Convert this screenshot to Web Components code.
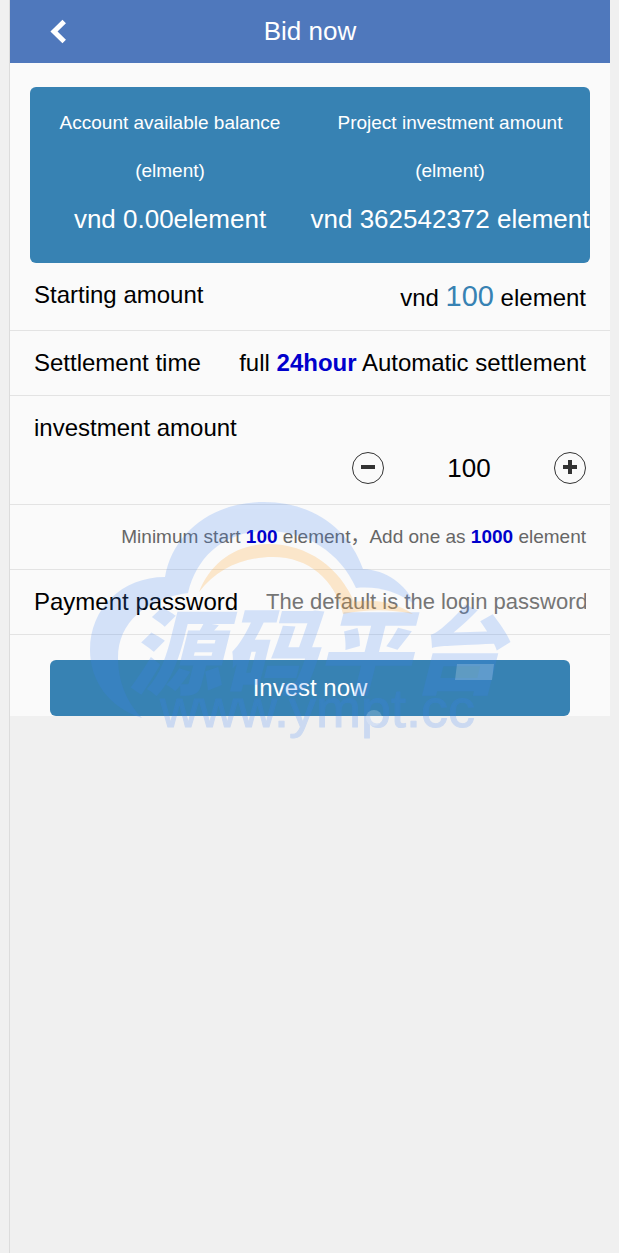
<!DOCTYPE html>
<html lang="en">
<head>
  <meta charset="UTF-8">
  <meta name="viewport" content="width=device-width, initial-scale=1.0">
  <title>Bid now</title>
  <style>
    :root {
      --header: #4f78bc;
      --primary: #3782b3;
      --surface: #fafafa;
      --bg: #f0f0f0;
      --line: #e3e3e3;
      --strong: #0000cc;
    }

    body {
      margin: 0;
      background: var(--bg);
      color: #000;
      font-family: 'Liberation Sans', 'Noto Sans CJK SC', sans-serif;
      font-size: 24px;
    }
  </style>
</head>
<body>
  <bid-page>
    <page-header slot="header" back="#">Bid now</page-header>
    <balance-card>
      <balance-item>
        Account available balance<br>(elment)
        <span slot="value">vnd 0.00element</span>
      </balance-item>
      <balance-item>
        Project investment amount<br>(elment)
        <span slot="value">vnd 362542372 element</span>
      </balance-item>
    </balance-card>
    <bid-form></bid-form>
    <water-mark slot="overlay"></water-mark>
  </bid-page>

  <script>
    class BidPage extends HTMLElement {
      constructor() {
        super();
        const shadow = this.attachShadow({ mode: 'open' });

        shadow.innerHTML = `
  <style>
    :host {
      display: block;
      position: relative;
      box-sizing: border-box;
      min-height: 100vh;
      margin: 0 9px;
      border-left: 1px solid #dcdcdc;
    }

    main {
      background: var(--surface);
      padding-top: 24px;
    }
  </style>

  <slot name="header"></slot>
  <main><slot></slot></main>
  <slot name="overlay"></slot>
`;
      }
    }

    class PageHeader extends HTMLElement {
      constructor() {
        super();
        const shadow = this.attachShadow({ mode: 'open' });

        shadow.innerHTML = `
  <style>
    :host {
      display: block;
    }

    header {
      display: grid;
      grid-template-columns: 96px 1fr 96px;
      align-items: center;
      height: 63px;
      background: var(--header);
      color: #fff;
    }

    a {
      display: flex;
      justify-content: center;
    }

    h1 {
      margin: 0;
      font-size: 26px;
      font-weight: 400;
      text-align: center;
    }
  </style>

  <header>
    <a href="${this.getAttribute('back')}" aria-label="Back">
      <svg width="20" height="28" viewBox="0 0 20 28" fill="none" stroke="#fff" stroke-width="5">
        <path d="M16.200 3.500 6 13.500l10.200 10"/>
      </svg>
    </a>
    <h1><slot></slot></h1>
  </header>
`;
      }
    }

    class BalanceCard extends HTMLElement {
      constructor() {
        super();
        const shadow = this.attachShadow({ mode: 'open' });

        shadow.innerHTML = `
  <style>
    :host {
      display: grid;
      grid-template-columns: 1fr 1fr;
      margin: 0 20px;
      padding: 12px 0 20px;
      border-radius: 6px;
      background: var(--primary);
      color: #fff;
    }
  </style>

  <slot></slot>
`;
      }
    }

    class BalanceItem extends HTMLElement {
      constructor() {
        super();
        const shadow = this.attachShadow({ mode: 'open' });

        shadow.innerHTML = `
  <style>
    :host {
      display: block;
      min-width: 0;
      line-height: 48px;
      text-align: center;
      white-space: nowrap;
    }

    .label {
      font-size: 19px;
    }

    .value {
      font-size: 26px;
    }
  </style>

  <div class="label"><slot></slot></div>
  <div class="value"><slot name="value"></slot></div>
`;
      }
    }

    class FormRow extends HTMLElement {
      constructor() {
        super();
        const shadow = this.attachShadow({ mode: 'open' });

        shadow.innerHTML = `
  <style>
    :host {
      display: flex;
      justify-content: space-between;
      padding: 0 24px;
      border-bottom: 1px solid var(--line);
      line-height: 64px;
      white-space: nowrap;
    }

    :host([hint]) {
      justify-content: flex-end;
      font-size: 19px;
      color: #666;
    }
  </style>

  <slot name="label"></slot>
  <slot></slot>
`;
      }
    }

    class BidForm extends HTMLElement {
      constructor() {
        super();
        const shadow = this.attachShadow({ mode: 'open' });

        shadow.innerHTML = `
  <style>
    :host {
      display: block;
    }

    form {
      margin: 0;
    }

    .amount {
      font-size: 29px;
      line-height: 66px;
      color: var(--primary);
    }

    b {
      color: var(--strong);
    }

    input {
      box-sizing: border-box;
      min-width: 0;
      padding: 0;
      border: 0;
      outline: 0;
      background: none;
      color: inherit;
      font-family: inherit;
    }

    .stepper {
      display: flex;
      align-items: center;
      width: 234px;
      height: 32px;
      margin: 56px 0 20px;
    }

    .stepper input {
      flex: 1;
      font-size: 26px;
      text-align: center;
    }

    .stepper button {
      display: flex;
      align-items: center;
      justify-content: center;
      width: 32px;
      height: 32px;
      padding: 0 0 2px;
      border: 1px solid #333;
      border-radius: 50%;
      background: none;
      color: #333;
    }

    #password {
      flex: 1;
      margin-left: 28px;
      font-size: 22px;
    }

    #password::placeholder {
      color: #757575;
    }

    .submit {
      display: block;
      width: calc(100% - 80px);
      height: 56px;
      margin: 25px 40px 0;
      border: 0;
      border-radius: 6px;
      background: var(--primary);
      color: #fff;
      font-family: inherit;
      font-size: 24px;
    }
  </style>

  <form>
    <form-row>
      <span slot="label">Starting amount</span>
      <span>vnd <span class="amount">100</span> element</span>
    </form-row>
    <form-row>
      <span slot="label">Settlement time</span>
      <span>full <b>24hour</b> Automatic settlement</span>
    </form-row>
    <form-row>
      <label slot="label" for="money">investment amount</label>
      <div class="stepper">
        <button type="button" class="minus" aria-label="Decrease">
          <svg width="14" height="14" viewBox="0 0 14 14" fill="currentColor"><path d="M0 5h14v4H0z"/></svg>
        </button>
        <input id="money" type="text" inputmode="numeric" value="100">
        <button type="button" class="plus" aria-label="Increase">
          <svg width="14" height="14" viewBox="0 0 14 14" fill="currentColor"><path d="M5 0h4v5h5v4H9v5H5V9H0V5h5z"/></svg>
        </button>
      </div>
    </form-row>
    <form-row hint>
      <span>Minimum start <b>100</b> element，Add one as <b>1000</b> element</span>
    </form-row>
    <form-row>
      <label slot="label" for="password">Payment password</label>
      <input id="password" type="password" placeholder="The default is the login password">
    </form-row>
    <button type="submit" class="submit">Invest now</button>
  </form>
`;

        const money = shadow.querySelector('#money');
        const step = (amount) => {
          money.value = Math.max(100, Number(money.value) + amount);
        };
        shadow.querySelector('.minus').addEventListener('click', () => step(-1000));
        shadow.querySelector('.plus').addEventListener('click', () => step(1000));
        shadow.querySelector('form').addEventListener('submit', (e) => e.preventDefault());
      }
    }

    class WaterMark extends HTMLElement {
      constructor() {
        super();
        const shadow = this.attachShadow({ mode: 'open' });

        shadow.innerHTML = `
  <style>
    :host {
      position: absolute;
      top: 490px;
      left: calc(50% - 230px);
      pointer-events: none;
    }

    svg {
      display: block;
    }

    .name {
      font: italic 900 94px 'Noto Sans CJK SC', sans-serif;
    }

    .site {
      font: 54px 'Liberation Sans', sans-serif;
      stroke: #3c82f5;
      stroke-width: 1;
      stroke-linejoin: round;
    }
  </style>

  <svg width="450" height="260" viewBox="0 0 450 260">
    <g fill="#3c82f5" opacity="0.2">
      <path d="M62 228C28 217 10 190 10 160C10 118 42 87 85 87C93 42 133 12 184 12C231 12 268 37 283 79C306 80 326 94 335 115C319 102 299 96 276 98C260 62 226 41 187 41C146 41 117 65 108 103C66 109 38 132 38 168C38 191 47 213 62 228Z"/>
      <text class="name" x="48" y="197">源码平台</text>
      <text class="site" x="80" y="237">www.ympt.cc</text>
    </g>
    <path fill="#ffa01e" opacity="0.22" d="M119 102C130 73 156 54 188 54C228 54 260 78 274 112C296 108 317 113 333 124C310 119 287 119 263 124C255 90 229 67 193 67C162 67 137 79 119 102Z"/>
    <g fill="#ffffff" opacity="0.2">
      <path d="M377 174h37l-2 16h-37z"/>
      <circle cx="294" cy="228" r="8"/>
    </g>
  </svg>
`;
      }
    }

    customElements.define('bid-page', BidPage);
    customElements.define('page-header', PageHeader);
    customElements.define('balance-card', BalanceCard);
    customElements.define('balance-item', BalanceItem);
    customElements.define('form-row', FormRow);
    customElements.define('bid-form', BidForm);
    customElements.define('water-mark', WaterMark);
  </script>
</body>
</html>
